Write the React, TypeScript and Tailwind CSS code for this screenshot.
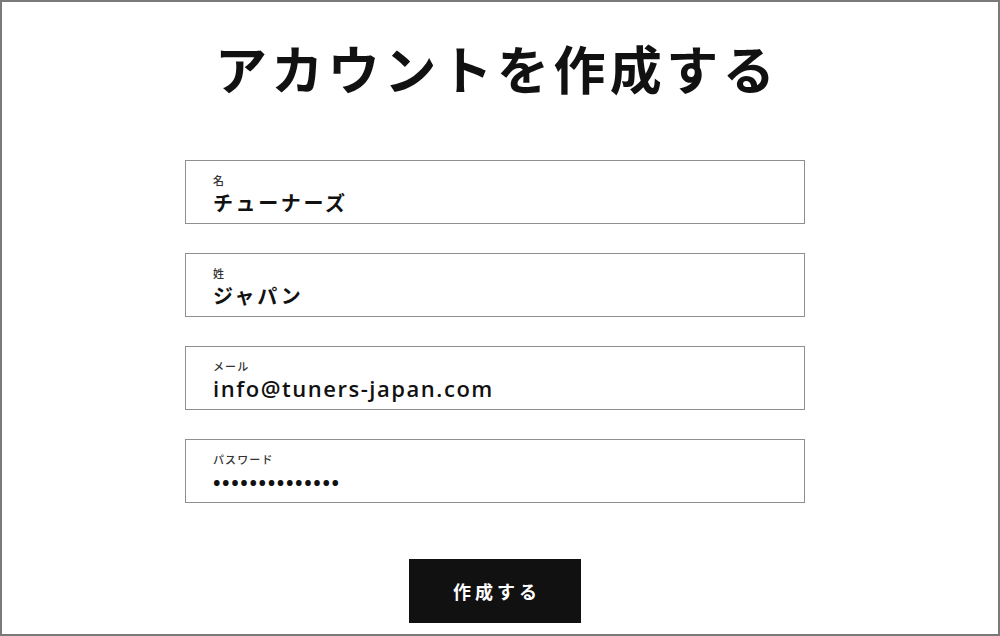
import React from "react";

const jp = { fontFamily: '"Noto Sans CJK JP", "Noto Sans", sans-serif' };

function Box({ label, children }: { label: string; children: React.ReactNode }) {
  return (
    <div className="w-[620px] h-[64px] border border-[#8f8f8f] pl-[27px] pt-[11px] flex flex-col">
      <div className="text-[11px] leading-[16px] font-medium text-[#333] tracking-[0.1em]">{label}</div>
      {children}
    </div>
  );
}

export default function App() {
  return (
    <div className="w-[1000px] h-[636px] border-2 border-[#7a7a7a] bg-white flex flex-col items-center overflow-hidden pr-[10px]" style={jp}>
      <h1 className="mt-[30px] text-[52px] leading-[72px] font-bold text-[#111] tracking-[0.085em] pl-[4px]">アカウントを作成する</h1>
      <div className="mt-[56px] flex flex-col gap-[29px]">
        <Box label="名">
          <div className="mt-[2px] text-[20px] leading-[26px] font-bold text-[#111] tracking-[0.13em]">チューナーズ</div>
        </Box>
        <Box label="姓">
          <div className="mt-[2px] text-[20px] leading-[26px] font-bold text-[#111] tracking-[0.13em]">ジャパン</div>
        </Box>
        <Box label="メール">
          <div
            className="mt-[1px] text-[22px] leading-[26px] font-semibold text-[#111] tracking-[0.07em]"
            style={{ fontFamily: '"Open Sans", sans-serif' }}
          >
            info@tuners-japan.com
          </div>
        </Box>
        <Box label="パスワード">
          <div
            className="mt-[3px] text-[20px] leading-[26px] font-bold text-[#111] tracking-[0.08em]"
            style={{ fontFamily: '"Open Sans", sans-serif' }}
          >
            ••••••••••••••
          </div>
        </Box>
      </div>
      <button className="mt-[56px] w-[172px] h-[64px] bg-[#111] text-white text-[18px] font-bold tracking-[0.22em] pl-[4px]">作成する</button>
    </div>
  );
}
